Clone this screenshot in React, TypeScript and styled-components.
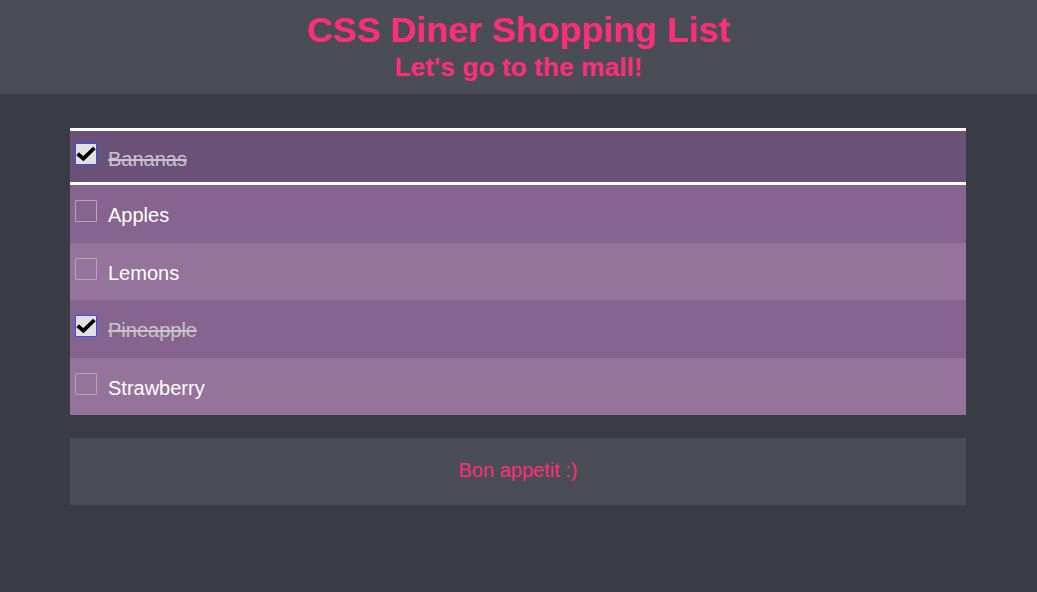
import React from "react";
import styled, { createGlobalStyle } from "styled-components";

const GlobalStyle = createGlobalStyle`
  html, body {
    margin: 0;
    padding: 0;
    background: #393c44;
    font-family: "Liberation Sans", Arial, sans-serif;
  }
  * { box-sizing: border-box; }
`;

const Page = styled.div`
  min-height: 592px;
  background: #393c44;
`;

const Header = styled.header`
  background: #4a4d55;
  height: 94px;
  padding-top: 10px;
  display: flex;
  flex-direction: column;
  align-items: center;
  color: #fe2e7b;
`;

const Title = styled.h1`
  margin: 0;
  font-size: 35.8px;
  line-height: 41px;
  font-weight: 700;
`;

const Subtitle = styled.h2`
  margin: 1px 0 0;
  font-size: 26.4px;
  line-height: 31px;
  font-weight: 700;
`;

const Main = styled.main`
  padding: 34px 71px 0 70px;
  display: flex;
  flex-direction: column;
  gap: 23px;
`;

const List = styled.ul`
  list-style: none;
  margin: 0;
  padding: 0;
  display: flex;
  flex-direction: column;
`;

type Shade = "active" | "dark" | "light";

const Row = styled.li<{ $shade: Shade }>`
  height: 57.4px;
  display: flex;
  align-items: flex-start;
  gap: 11px;
  padding: ${(p) => (p.$shade === "active" ? "12px 5px 0" : "15px 5px 0")};
  background: ${(p) =>
    p.$shade === "active" ? "#6b5177" : p.$shade === "dark" ? "#87648f" : "#95739b"};
  border-top: ${(p) => (p.$shade === "active" ? "3px solid #ffffff" : "none")};
  border-bottom: ${(p) => (p.$shade === "active" ? "3px solid #ffffff" : "none")};
`;

const BoxWrap = styled.span`
  position: relative;
  width: 22px;
  height: 22px;
  flex: none;
  display: block;
`;

const Box = styled.span<{ $checked: boolean }>`
  display: block;
  width: 22px;
  height: 22px;
  border: 1px solid ${(p) => (p.$checked ? "#2f50ff" : "#b3a8b6")};
  background: ${(p) => (p.$checked ? "#e1e1e1" : "transparent")};
  border-radius: 1px;
`;

const CheckLayer = styled.span`
  position: absolute;
  inset: 0;
  display: block;
`;

const Label = styled.span<{ $checked: boolean; $active: boolean }>`
  font-size: 20px;
  line-height: ${(p) => (p.$active ? "32px" : "30px")};
  color: ${(p) => (p.$checked ? "#c8c4c9" : "#ffffff")};
  text-decoration: ${(p) => (p.$checked ? "line-through" : "none")};
`;

const Footer = styled.footer`
  height: 67px;
  background: #4a4d55;
  display: flex;
  align-items: center;
  justify-content: center;
  color: #fe2e7b;
  font-size: 20px;
  padding-bottom: 1px;
`;

const Check = () => (
  <svg width="22" height="22" viewBox="0 0 22 22">
    <path
      d="M2.6 10.8 L8.4 15.6 L19.4 5"
      fill="none"
      stroke="#000"
      strokeWidth="3.8"
      strokeLinecap="butt"
      strokeLinejoin="miter"
    />
  </svg>
);

const items: { name: string; checked: boolean }[] = [
  { name: "Bananas", checked: true },
  { name: "Apples", checked: false },
  { name: "Lemons", checked: false },
  { name: "Pineapple", checked: true },
  { name: "Strawberry", checked: false },
];

export default function App() {
  return (
    <Page>
      <GlobalStyle />
      <Header>
        <Title>CSS Diner Shopping List</Title>
        <Subtitle>Let's go to the mall!</Subtitle>
      </Header>
      <Main>
        <List>
          {items.map((it, i) => {
            const shade: Shade = i === 0 ? "active" : i % 2 === 1 ? "dark" : "light";
            return (
              <Row key={it.name} $shade={shade}>
                <BoxWrap>
                  <Box $checked={it.checked} />
                  {it.checked && (
                    <CheckLayer>
                      <Check />
                    </CheckLayer>
                  )}
                </BoxWrap>
                <Label $checked={it.checked} $active={shade === "active"}>
                  {it.name}
                </Label>
              </Row>
            );
          })}
        </List>
        <Footer>Bon appetit :)</Footer>
      </Main>
    </Page>
  );
}
